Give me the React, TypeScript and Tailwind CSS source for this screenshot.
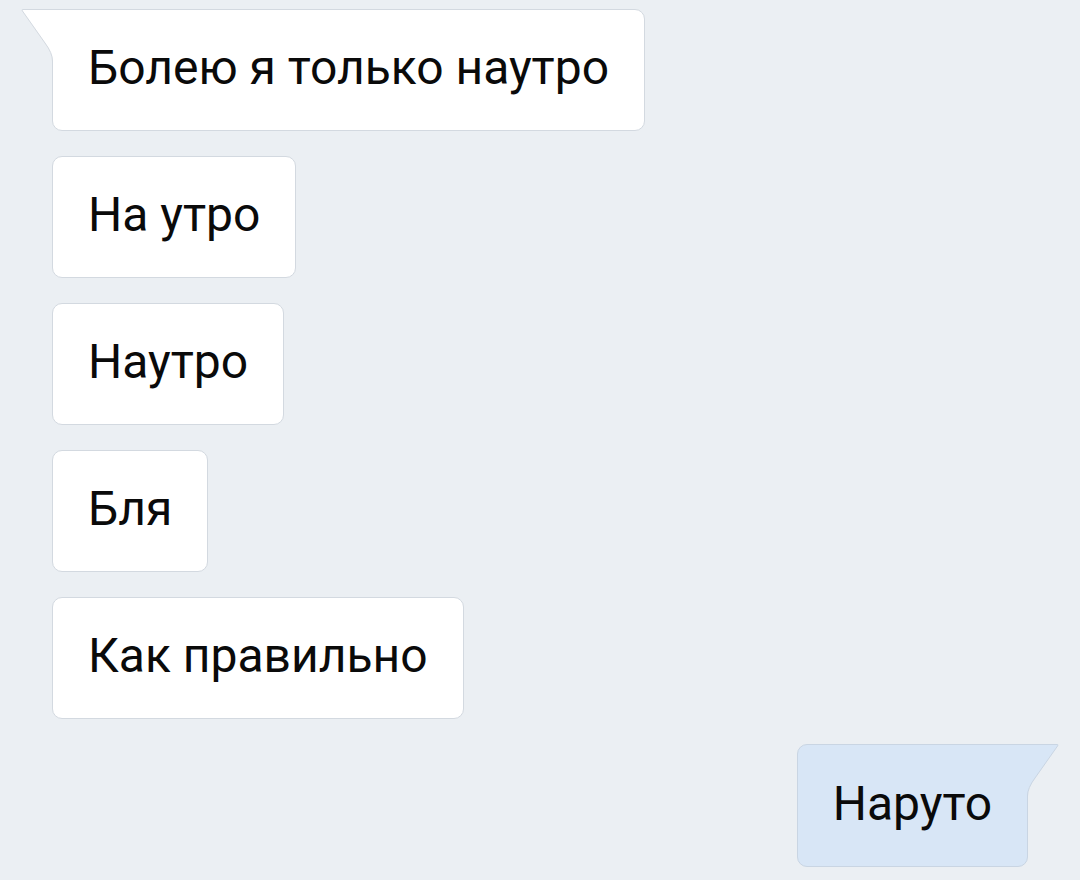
import React from "react";

const font = { fontFamily: "Roboto, 'Noto Sans', sans-serif" };

function LeftTail() {
  return (
    <svg
      className="absolute left-[-32px] top-[-1px]"
      width="34"
      height="60"
      viewBox="0 0 34 60"
    >
      <path
        d="M34 0.5 L2 0.5 Q0.5 0.5 1.3 1.8 L24 34 Q31.5 44 31.5 52 L34 52 Z"
        fill="#ffffff"
      />
      <path
        d="M34 0.5 L2 0.5 Q0.5 0.5 1.3 1.8 L24 34 Q31.5 44 31.5 52"
        fill="none"
        stroke="#d3d9e0"
        strokeWidth="1"
      />
    </svg>
  );
}

function RightTail() {
  return (
    <svg
      className="absolute right-[-32px] top-[-1px]"
      width="34"
      height="60"
      viewBox="0 0 34 60"
    >
      <path
        d="M0 0.5 L32 0.5 Q33.5 0.5 32.7 1.8 L10 34 Q2.5 44 2.5 52 L0 52 Z"
        fill="#d8e6f6"
      />
      <path
        d="M0 0.5 L32 0.5 Q33.5 0.5 32.7 1.8 L10 34 Q2.5 44 2.5 52"
        fill="none"
        stroke="#c9d5e3"
        strokeWidth="1"
      />
    </svg>
  );
}

function Bubble({ text, tail }: { text: string; tail?: boolean }) {
  return (
    <div
      className={`relative flex h-[122px] items-center self-start rounded-[10px] border border-[#d3d9e0] bg-white px-[35px] ${
        tail ? "rounded-tl-none" : ""
      }`}
    >
      {tail && <LeftTail />}
      <span className="text-[48px] leading-none text-[#0a0a0a] pb-[4px]" style={font}>
        {text}
      </span>
    </div>
  );
}

export default function App() {
  return (
    <div className="flex min-h-[880px] w-[1080px] flex-col gap-[25px] bg-[#ebeff3] pl-[52px] pr-[52px] pt-[9px]">
      <Bubble text="Болею я только наутро" tail />
      <Bubble text="На утро" />
      <Bubble text="Наутро" />
      <Bubble text="Бля" />
      <Bubble text="Как правильно" />
      <div className="relative flex h-[123px] items-center self-end rounded-[10px] rounded-tr-none border border-[#c9d5e3] bg-[#d8e6f6] px-[35px]">
        <RightTail />
        <span className="text-[48px] leading-none text-[#0a0a0a] pb-[4px]" style={font}>
          Наруто
        </span>
      </div>
    </div>
  );
}
